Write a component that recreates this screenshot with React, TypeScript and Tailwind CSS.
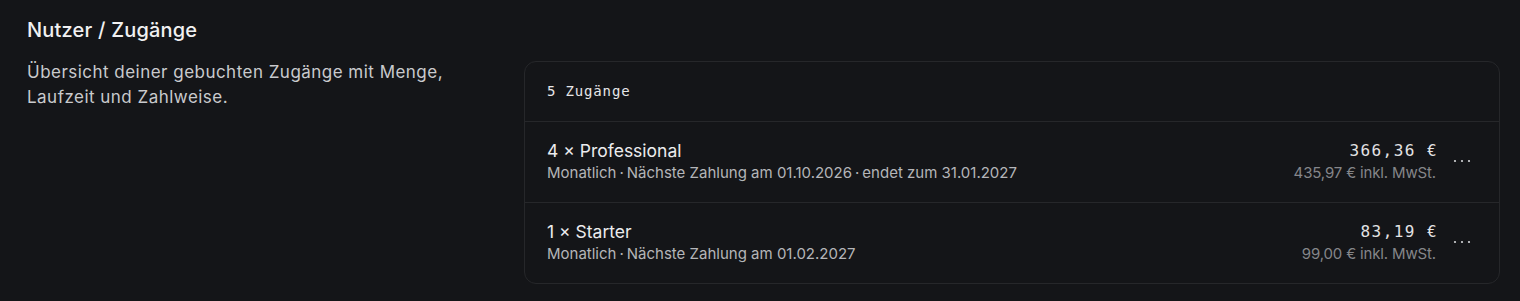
import React from "react"

interface Seat {
  qty: number
  plan: string
  meta: string[]
  net: string
  gross: string
}

const seats: Seat[] = [
  {
    qty: 4,
    plan: "Professional",
    meta: ["Monatlich", "Nächste Zahlung am 01.10.2026", "endet zum 31.01.2027"],
    net: "366,36 €",
    gross: "435,97 € inkl. MwSt.",
  },
  {
    qty: 1,
    plan: "Starter",
    meta: ["Monatlich", "Nächste Zahlung am 01.02.2027"],
    net: "83,19 €",
    gross: "99,00 € inkl. MwSt.",
  },
]

const sans = "font-['Inter','Noto_Sans',sans-serif]"
const mono = "font-['DejaVu_Sans_Mono','Liberation_Mono',monospace]"

function Dots() {
  return (
    <button className="flex h-6 w-6 items-center justify-center text-[#d4d5d8]">
      <svg width="18" height="4" viewBox="0 0 18 4" fill="currentColor">
        <circle cx="2" cy="2" r="1.1" />
        <circle cx="9" cy="2" r="1.1" />
        <circle cx="16" cy="2" r="1.1" />
      </svg>
    </button>
  )
}

function SeatRow({ seat }: { seat: Seat }) {
  return (
    <div className="flex items-center border-t border-[#26272a] pl-[22px] pr-[25px] pt-[17px] pb-[19px]">
      <div className="flex-1 min-w-0">
        <div className="text-[17.5px] leading-6 text-[#ececee]">
          {seat.qty} × {seat.plan}
        </div>
        <div className="text-[15px] leading-5 text-[#b4b5b9]">
          {seat.meta.map((m, i) => (
            <React.Fragment key={i}>
              {i > 0 && <span className="px-[3px]">·</span>}
              {m}
            </React.Fragment>
          ))}
        </div>
      </div>
      <div className="flex flex-col items-end">
        <span className={`${mono} -mr-[2px] text-[16px] leading-6 tracking-[0.09em] text-[#e2e2e4]`}>
          {seat.net}
        </span>
        <span className="text-[15px] leading-5 tracking-[-0.01em] text-[#85868a]">{seat.gross}</span>
      </div>
      <div className="ml-[14px]">
        <Dots />
      </div>
    </div>
  )
}

export default function App() {
  return (
    <div className={`${sans} min-h-[301px] w-full bg-[#141518] pl-[27px] pr-[20px] pt-4`}>
      <h2 className="text-[20px] leading-7 font-medium tracking-[0.01em] text-[#f1f1f2]">Nutzer / Zugänge</h2>
      <div className="mt-[17px] flex">
        <p className="-mt-[1px] w-[497px] shrink-0 pr-10 text-[17px] leading-[25px] tracking-[0.028em] text-[#c9cacd]">
          Übersicht deiner gebuchten Zugänge mit Menge, Laufzeit und Zahlweise.
        </p>
        <div className="flex-1 rounded-xl border border-[#26272a] bg-[#141518]">
          <div className={`${mono} flex h-[59px] items-center px-[22px] text-[14px] tracking-[0.06em] text-[#e6e6e8]`}>
            5 Zugänge
          </div>
          {seats.map((s) => (
            <SeatRow key={s.plan} seat={s} />
          ))}
        </div>
      </div>
    </div>
  )
}
